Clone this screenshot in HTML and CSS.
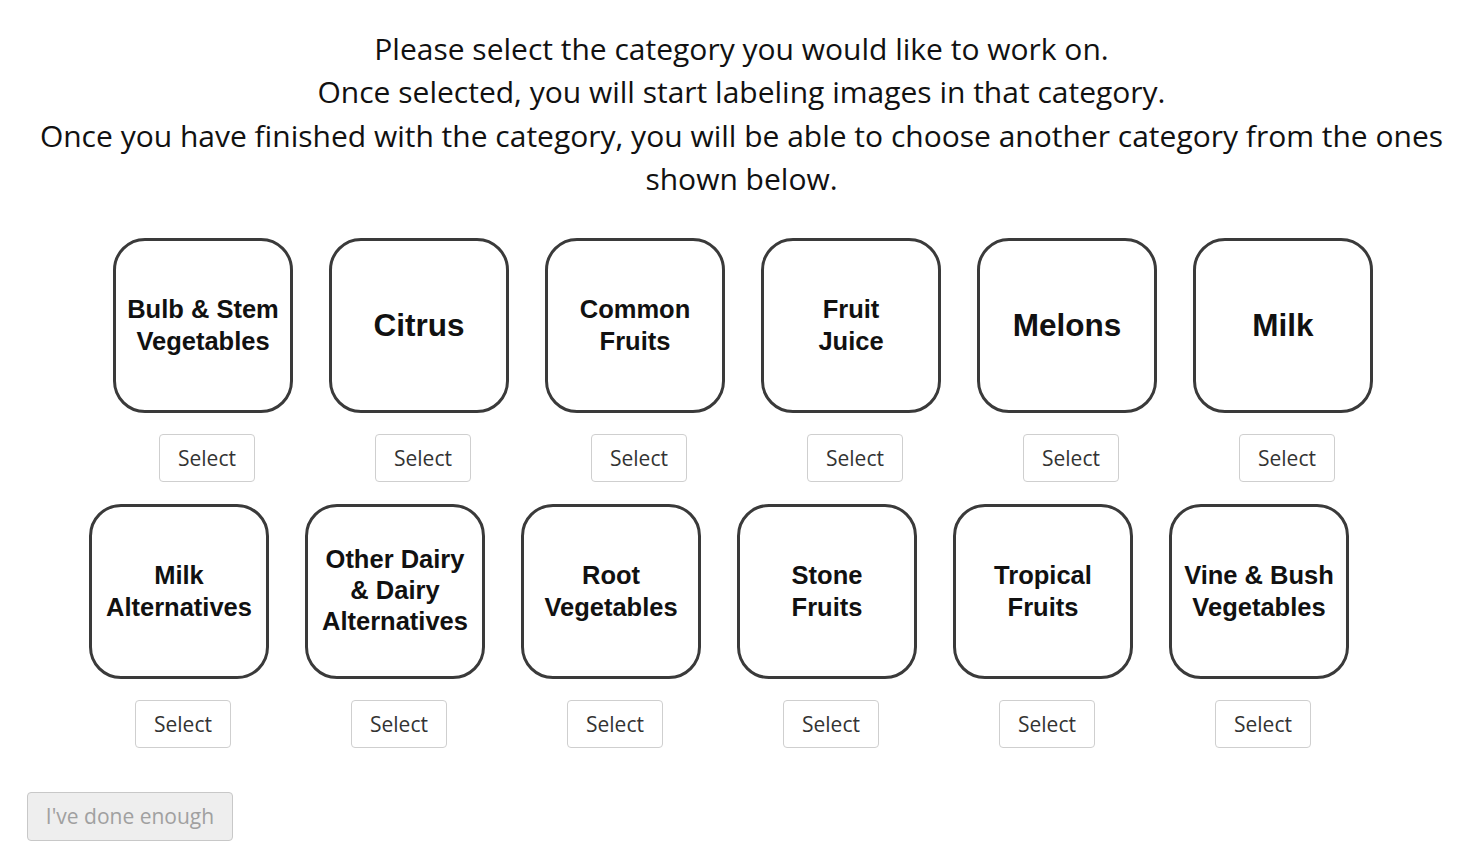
FILE: index.html
```html
<!DOCTYPE html>
<html>
<head>
<meta charset="utf-8">
<link rel="stylesheet" href="styles.css">
</head>
<body>
<div class="intro">
  <p>Please select the category you would like to work on.</p>
  <p>Once selected, you will start labeling images in that category.</p>
  <p>Once you have finished with the category, you will be able to choose another category from the ones shown below.</p>
</div>
<div class="row row-a">
  <div class="cell"><div class="tile">Bulb &amp; Stem<br>Vegetables</div><button class="select">Select</button></div>
  <div class="cell"><div class="tile big">Citrus</div><button class="select">Select</button></div>
  <div class="cell"><div class="tile">Common<br>Fruits</div><button class="select">Select</button></div>
  <div class="cell"><div class="tile">Fruit<br>Juice</div><button class="select">Select</button></div>
  <div class="cell"><div class="tile big">Melons</div><button class="select">Select</button></div>
  <div class="cell"><div class="tile big">Milk</div><button class="select">Select</button></div>
</div>
<div class="row row-b">
  <div class="cell"><div class="tile">Milk<br>Alternatives</div><button class="select">Select</button></div>
  <div class="cell"><div class="tile three">Other Dairy<br>&amp; Dairy<br>Alternatives</div><button class="select">Select</button></div>
  <div class="cell"><div class="tile">Root<br>Vegetables</div><button class="select">Select</button></div>
  <div class="cell"><div class="tile">Stone<br>Fruits</div><button class="select">Select</button></div>
  <div class="cell"><div class="tile">Tropical<br>Fruits</div><button class="select">Select</button></div>
  <div class="cell"><div class="tile">Vine &amp; Bush<br>Vegetables</div><button class="select">Select</button></div>
</div>
<div class="footer">
  <button class="done" disabled>I've done enough</button>
</div>
</body>
</html>
```

FILE: styles.css
```css
html, body {
  margin: 0;
  padding: 0;
  background: #fff;
}
body {
  font-family: "Open Sans", "Liberation Sans", sans-serif;
  color: #111;
  padding: 0 8px;
}
.intro {
  padding-top: 27px;
  text-align: center;
  font-size: 30px;
  line-height: 43.4px;
}
.intro p {
  margin: 0;
}
.row {
  display: grid;
  grid-template-columns: repeat(6, 216px);
}
.row-a {
  margin-top: 37px;
  margin-left: 105px;
}
.row-b {
  margin-top: 22px;
  margin-left: 81px;
}
.cell {
  display: flex;
  flex-direction: column;
  align-items: flex-start;
}
.tile {
  box-sizing: border-box;
  width: 180px;
  height: 175px;
  border: 3px solid #3a3a3a;
  border-radius: 32px;
  display: flex;
  align-items: center;
  justify-content: center;
  text-align: center;
  font-family: "Liberation Sans", Arial, sans-serif;
  font-weight: bold;
  font-size: 25.5px;
  line-height: 32px;
  color: #111;
}
.tile.three {
  line-height: 31px;
  padding-bottom: 2px;
}
.tile.big {
  font-size: 31.5px;
}
.select {
  margin-top: 21px;
  margin-left: 46px;
  width: 96px;
  height: 48px;
  background: #fff;
  border: 1px solid #cfcfcf;
  border-radius: 4px;
  font-family: "Open Sans", sans-serif;
  font-size: 21px;
  color: #333;
  padding: 0;
}
.footer {
  margin-top: 44px;
  padding-left: 19px;
}
.done {
  width: 206px;
  height: 49px;
  background: #eee;
  border: 1px solid #c8c8c8;
  border-radius: 4px;
  font-family: "Open Sans", sans-serif;
  font-size: 21px;
  color: #a0a0a0;
  padding: 0;
}
```
